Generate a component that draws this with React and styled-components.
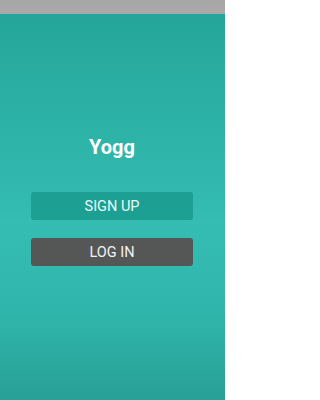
import React from "react";
import styled, { createGlobalStyle } from "styled-components";

const Global = createGlobalStyle`
  html, body { margin: 0; padding: 0; height: 100%; }
  body { font-family: Roboto, "Noto Sans", Arial, sans-serif; }
  #root { height: 100%; }
`;

const Screen = styled.div`
  display: flex;
  flex-direction: column;
  width: 225px;
  height: 400px;
  overflow: hidden;
`;

const StatusBar = styled.div`
  height: 14px;
  flex: none;
  background: linear-gradient(#a6a6a6 0, #a9a9a9 10px, #b2a3a6 12px, #93b3b4 14px);
`;

const Main = styled.main`
  flex: 1;
  display: flex;
  flex-direction: column;
  align-items: center;
  padding: 121px 32px 0 31px;
  background: linear-gradient(
    180deg,
    #26a69a 0%,
    #2db2a7 30%,
    #35bdb3 55%,
    #30b5ab 78%,
    #27a096 100%
  );
`;

const Title = styled.h1`
  margin: 0 0 33px;
  font-size: 20px;
  line-height: 24px;
  font-weight: 700;
  color: #ffffff;
`;

const Button = styled.button`
  width: 162px;
  height: 28px;
  margin-bottom: ${(p) => p.$gap || 0}px;
  border: none;
  border-radius: 3px;
  background: ${(p) => p.$bg};
  color: ${(p) => p.$fg};
  font-family: Roboto, "Noto Sans", Arial, sans-serif;
  font-size: 14.5px;
  letter-spacing: 0;
  padding: 0;
  display: flex;
  align-items: center;
  justify-content: center;
`;

export default function App() {
  return (
    <>
      <Global />
      <Screen>
        <StatusBar />
        <Main>
          <Title>Yogg</Title>
          <Button $bg="#1d9f93" $fg="#e8fbf8" $gap={18}>SIGN UP</Button>
          <Button $bg="#555757" $fg="#f2f2f2">LOG IN</Button>
        </Main>
      </Screen>
    </>
  );
}
